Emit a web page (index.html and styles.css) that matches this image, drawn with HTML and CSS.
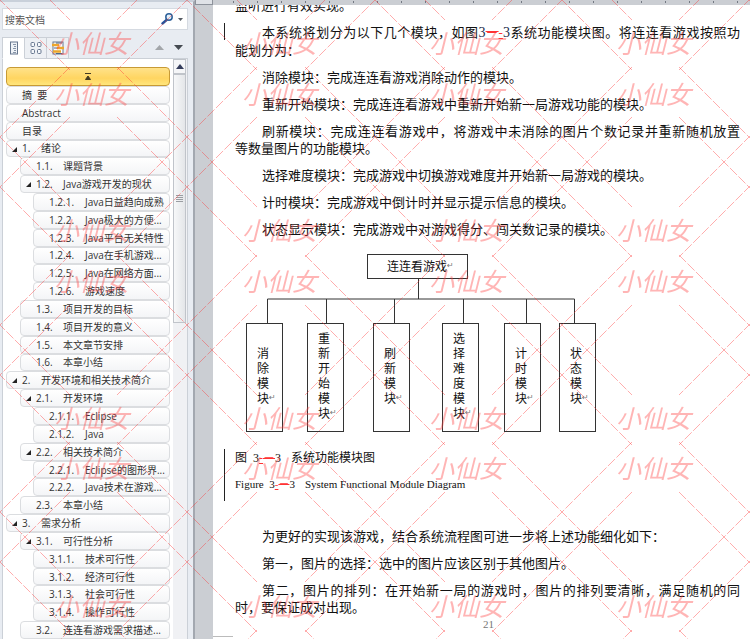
FILE: index.html
```html
<!DOCTYPE html>
<html lang="zh-CN">
<head>
<meta charset="utf-8">
<title>连连看游戏</title>
<link rel="stylesheet" href="styles.css">
</head>
<body>
<div class="app">
  <aside class="nav">
    <form class="search">
      <input type="search" placeholder="搜索文档" aria-label="搜索文档">
      <button type="button" class="plain" aria-label="搜索">
        <svg width="24" height="14" viewBox="0 0 24 14"><path d="M1.500 11.500 5.500 8" stroke="#27549b" stroke-width="2.400" stroke-linecap="round"/><circle cx="8" cy="5" r="3.200" fill="#e4f1fb" stroke="#2d6099" stroke-width="1.500"/><path d="M17 6h5l-2.500 3z" fill="#555b63"/></svg>
      </button>
    </form>
    <div class="tabs">
      <button type="button" class="tab active" aria-label="标题">
        <svg width="14" height="14" viewBox="0 0 14 14"><rect x="3.500" y="1" width="7" height="12" fill="#eef2f7" stroke="#67778f"/><path d="M6 3.500h3M7 5.500h2M6 7.500h3M7 9.500h2M6 11.500h3" stroke="#8794a8"/></svg>
      </button>
      <button type="button" class="tab" aria-label="页面">
        <svg width="14" height="14" viewBox="0 0 14 14" fill="#f5f8fc" stroke="#67778f"><rect x="2" y="1.500" width="3.500" height="4" rx="1"/><rect x="8.500" y="1.500" width="3.500" height="4" rx="1"/><rect x="2" y="8.500" width="3.500" height="4" rx="1"/><rect x="8.500" y="8.500" width="3.500" height="4" rx="1"/></svg>
      </button>
      <button type="button" class="tab" aria-label="结果">
        <svg width="14" height="14" viewBox="0 0 14 14"><rect x="2" y="1" width="10" height="12" fill="#fff" stroke="#67778f"/><path d="M1 4h7M6 7h7M2 10.500h8" stroke="#eda62b" stroke-width="2.500"/><path d="M5 2h6M3 7h3M5 12.500h6" stroke="#4e6689"/></svg>
      </button>
      <span class="steps">
        <button type="button" class="plain" aria-label="上一个"><svg width="9" height="6"><path d="M0 5h9L4.500 0z" fill="#a3a6aa"/></svg></button>
        <button type="button" class="plain" aria-label="下一个"><svg width="9" height="6"><path d="M0 0h9L4.500 5z" fill="#454a51"/></svg></button>
      </span>
    </div>
    <div class="panel">
      <div class="outline">
        <button type="button" class="top" aria-label="跳转到文档开头"><svg width="8" height="7"><path d="M1 .5h6M1.500 6.500 4 3l2.500 3.500z" stroke="#453a20" fill="#453a20"/></svg></button>
        <nav class="tree">
          <a href="#" class="l1">摘&nbsp; 要</a>
          <a href="#" class="l1">Abstract</a>
          <a href="#" class="l1">目录</a>
          <a href="#" class="l1 open"><b>1.</b>绪论</a>
          <a href="#" class="l2"><b>1.1.</b>课题背景</a>
          <a href="#" class="l2 open"><b>1.2.</b>Java游戏开发的现状</a>
          <a href="#" class="l3"><b>1.2.1.</b>Java日益趋向成熟</a>
          <a href="#" class="l3"><b>1.2.2.</b>Java极大的方便...</a>
          <a href="#" class="l3"><b>1.2.3.</b>Java平台无关特性</a>
          <a href="#" class="l3"><b>1.2.4.</b>Java在手机游戏...</a>
          <a href="#" class="l3"><b>1.2.5.</b>Java在网络方面...</a>
          <a href="#" class="l3"><b>1.2.6.</b>游戏速度</a>
          <a href="#" class="l2"><b>1.3.</b>项目开发的目标</a>
          <a href="#" class="l2"><b>1.4.</b>项目开发的意义</a>
          <a href="#" class="l2"><b>1.5.</b>本文章节安排</a>
          <a href="#" class="l2"><b>1.6.</b>本章小结</a>
          <a href="#" class="l1 open"><b>2.</b>开发环境和相关技术简介</a>
          <a href="#" class="l2 open"><b>2.1.</b>开发环境</a>
          <a href="#" class="l3"><b>2.1.1.</b>Eclipse</a>
          <a href="#" class="l3"><b>2.1.2.</b>Java</a>
          <a href="#" class="l2 open"><b>2.2.</b>相关技术简介</a>
          <a href="#" class="l3"><b>2.2.1.</b>Eclipse的图形界...</a>
          <a href="#" class="l3"><b>2.2.2.</b>Java技术在游戏...</a>
          <a href="#" class="l2"><b>2.3.</b>本章小结</a>
          <a href="#" class="l1 open"><b>3.</b>需求分析</a>
          <a href="#" class="l2 open"><b>3.1.</b>可行性分析</a>
          <a href="#" class="l3"><b>3.1.1.</b>技术可行性</a>
          <a href="#" class="l3"><b>3.1.2.</b>经济可行性</a>
          <a href="#" class="l3"><b>3.1.3.</b>社会可行性</a>
          <a href="#" class="l3"><b>3.1.4.</b>操作可行性</a>
          <a href="#" class="l2"><b>3.2.</b>连连看游戏需求描述...</a>
        </nav>
      </div>
      <div class="scroll">
        <button type="button" class="up" aria-label="向上滚动"><svg width="8" height="5"><path d="M0 5h8L4 0z" fill="#343c5b"/></svg></button>
        <div class="thumb"><svg width="7" height="7"><path d="M0 .5h7M0 2.500h7M0 4.500h7M0 6.500h7" stroke="#9a9da2"/></svg></div>
      </div>
    </div>
  </aside>
  <div class="gutter"><div class="corner"></div></div>
  <main class="doc">
    <div class="ruler"></div>
    <article class="page">
      <p class="flat">监听进行有效实现。</p>
      <p class="changed"><span class="full">本系统将划分为以下几个模块，如图<i class="num">3</i><del>－</del><ins>-</ins><i class="num">3</i>系统功能模块图。将连连看游戏按照功</span>能划分为：</p>
      <p>消除模块：完成连连看游戏消除动作的模块。</p>
      <p>重新开始模块：完成连连看游戏中重新开始新一局游戏功能的模块。</p>
      <p><span class="full">刷新模块：完成连连看游戏中，将游戏中未消除的图片个数记录并重新随机放置</span>等数量图片的功能模块。</p>
      <p>选择难度模块：完成游戏中切换游戏难度并开始新一局游戏的模块。</p>
      <p>计时模块：完成游戏中倒计时并显示提示信息的模块。</p>
      <p>状态显示模块：完成游戏中对游戏得分、闯关数记录的模块。</p>
      <figure class="figure">
        <div class="diagram">
          <svg class="wires" width="362" height="178" fill="none" stroke="#333"><path d="M183.500 24v21M32.500 69v-24h307v24M91.500 45v24M159.500 45v24M228.500 45v24M291.500 45v24"/></svg>
          <div class="root">连连看游戏<s>↵</s></div>
          <div class="node n1">消<br>除<br>模<br>块<s>↵</s></div>
          <div class="node n2">重<br>新<br>开<br>始<br>模<br>块<s>↵</s></div>
          <div class="node n3">刷<br>新<br>模<br>块<s>↵</s></div>
          <div class="node n4">选<br>择<br>难<br>度<br>模<br>块<s>↵</s></div>
          <div class="node n5">计<br>时<br>模<br>块<s>↵</s></div>
          <div class="node n6">状<br>态<br>模<br>块<s>↵</s></div>
        </div>
        <figcaption>
          <div>图&nbsp; 3<ins>-</ins><del>－</del>3<span class="title">系统功能模块图</span></div>
          <div class="en">Figure&nbsp; 3<ins>-</ins><del>－</del>3<span class="title">System Functional Module Diagram</span></div>
        </figcaption>
      </figure>
      <p>为更好的实现该游戏，结合系统流程图可进一步将上述功能细化如下：</p>
      <p>第一，图片的选择：选中的图片应该区别于其他图片。</p>
      <p><span class="full">第二，图片的排列：在开始新一局的游戏时，图片的排列要清晰，满足随机的同</span>时，要保证成对出现。</p>
      <footer>21</footer>
    </article>
  </main>
</div>
<svg class="watermark" aria-hidden="true">
  <defs>
    <path id="cross" d="M-70-70 70 70M70-70-70 70"/>
    <g id="column">
      <use href="#cross" y="-50"/><use href="#cross" y="0"/>
      <use href="#cross" y="137"/><use href="#cross" y="187"/>
      <use href="#cross" y="325"/><use href="#cross" y="375"/>
      <use href="#cross" y="512"/><use href="#cross" y="562"/>
      <use href="#cross" y="700"/>
    </g>
  </defs>
  <g class="lines">
    <use href="#column" x="0"/><use href="#column" x="187"/><use href="#column" x="375"/><use href="#column" x="562"/><use href="#column" x="749"/>
  </g>
  <g class="marks">
    <text x="54" y="53">小仙女</text><text x="242" y="53">小仙女</text><text x="429" y="53">小仙女</text><text x="616" y="53">小仙女</text>
    <text x="54" y="104">小仙女</text><text x="242" y="104">小仙女</text><text x="429" y="104">小仙女</text><text x="616" y="104">小仙女</text>
    <text x="54" y="240">小仙女</text><text x="242" y="240">小仙女</text><text x="429" y="240">小仙女</text><text x="616" y="240">小仙女</text>
    <text x="54" y="291">小仙女</text><text x="242" y="291">小仙女</text><text x="429" y="291">小仙女</text><text x="616" y="291">小仙女</text>
    <text x="54" y="428">小仙女</text><text x="242" y="428">小仙女</text><text x="429" y="428">小仙女</text><text x="616" y="428">小仙女</text>
    <text x="54" y="478">小仙女</text><text x="242" y="478">小仙女</text><text x="429" y="478">小仙女</text><text x="616" y="478">小仙女</text>
    <text x="54" y="616">小仙女</text><text x="242" y="616">小仙女</text><text x="429" y="616">小仙女</text><text x="616" y="616">小仙女</text>
  </g>
</svg>
</body>
</html>
```
FILE: styles.css
```css
* { box-sizing: border-box; }
body { margin: 0; overflow: hidden; font-family: "Open Sans", "Noto Sans CJK SC", sans-serif; }
button { font: inherit; margin: 0; padding: 0; }
svg { display: block; }
.app { display: flex; height: 100vh; background: #fff; }

/* Navigation pane */
.nav { flex: 0 0 195px; display: flex; flex-direction: column; padding: 6px 5px 0 2px; background: #e8ecf2; border-top: 2px solid #c9d0da; border-right: 2px solid #a3a8b0; }
.search { display: flex; align-items: center; height: 22px; margin: 0; background: #fff; border: 1px solid #d5dae1; padding-right: 2px; }
.search input { flex: 1; min-width: 0; padding: 0 0 0 2px; border: 0; outline: 0; background: none; font: 10px "Noto Sans CJK SC", sans-serif; }
.search input::placeholder { color: #555; opacity: 1; }
.plain { border: 0; background: none; }
.tabs { display: flex; height: 22px; margin-top: 7px; }
.tab { display: flex; align-items: center; justify-content: center; width: 22px; border: 1px solid #cbd0d7; border-left: 0; background: #edf0f4; }
.tab.active { width: 23px; border-left: 1px solid #cbd0d7; border-bottom-color: #fff; background: #fff; }
.steps { flex: 1; display: flex; align-items: center; justify-content: flex-end; gap: 10px; padding-right: 5px; border-bottom: 1px solid #cbd0d7; }
.panel { flex: 1; min-height: 0; display: flex; background: #fff; border: solid #cbd0d7; border-width: 0 1px; }
.outline { flex: 1; min-width: 0; display: flex; flex-direction: column; padding: 8px 3px 0 3px; }
.top { display: flex; align-items: center; justify-content: center; flex: 0 0 19px; border: 1px solid #c79a35; border-radius: 4px; background: linear-gradient(#ffe28a, #ffd561 60%, #ffe67c); }
.tree { flex: 1; min-height: 0; display: grid; grid-auto-rows: 1fr; }
.tree a { position: relative; display: flex; align-items: center; min-height: 0; overflow: hidden; border: 1px solid #dbdde0; border-radius: 4px; background: linear-gradient(#fff, #f4f5f7); color: #333; font-size: 10px; line-height: 14px; white-space: nowrap; text-decoration: none; padding-left: 15px; }
.tree b { flex: none; font-weight: 400; }
.l1 b { width: 19px; }
.tree .l2 { margin-left: 14px; }
.l2 b { width: 27px; }
.tree .l3 { margin-left: 27px; }
.l3 b { width: 36px; }
.open::before { content: ""; position: absolute; left: 5px; top: 6px; border: solid transparent; border-width: 0 0 5px 5px; border-bottom-color: #222; }
.scroll { flex: 0 0 14px; background: #f0f1f4; }
.up { display: flex; align-items: center; justify-content: center; width: 13px; height: 15px; border: 1px solid #c0c4ca; background: #f5f6f8; }
.thumb { display: flex; align-items: center; justify-content: center; width: 13px; height: 43%; border: 1px solid #c0c4ca; background: linear-gradient(90deg, #f7f8f9, #e4e6e9); }

/* Document area */
.gutter { flex: 0 0 18px; background: #cbced3; }
.corner { height: 5px; border: 1px solid #8d929b; border-top: 0; background: #dfe2e7; }
.doc { flex: 1; min-width: 0; }
.ruler { height: 5px; background: repeating-linear-gradient(90deg, transparent 0 20px, #737983 20px 21px, transparent 21px 24px) 0 1px / 100% 2px no-repeat, #cbced3; }
.page { position: relative; height: calc(100vh - 5px); overflow: hidden; padding: 0 8px 0 22px; color: #111; font: 13px/17px "Noto Sans CJK SC", sans-serif; }
.page::after { content: ""; position: absolute; left: 0; bottom: 2px; width: 20px; border-top: 1px solid #bbb; }
p { position: relative; margin: 0 0 10px; text-indent: 27px; }
.flat { margin-top: -9px; text-indent: 0; }
.full { display: block; text-align: justify; text-align-last: justify; white-space: nowrap; padding-right: 2px; }
.changed::before { content: ""; position: absolute; left: -11px; top: 0; height: 17px; border-left: 1px solid #222; }
.num { font: 14px/17px "Liberation Serif", serif; color: #1c2c4c; }
del, ins { color: #f33; }
ins { font-family: "Liberation Serif", serif; }
.figure { margin: 0; }
.diagram { position: relative; height: 178px; margin-top: 17px; font-size: 12px; line-height: 15px; }
.wires { position: absolute; left: 0; top: 0; }
.diagram s { position: absolute; text-decoration: none; color: #777; font: 8px/15px "DejaVu Sans", sans-serif; }
.root { position: absolute; left: 132px; top: 0; width: 101px; height: 25px; padding: 3px 0 0 19px; border: 1px solid #333; }
.node { position: absolute; top: 69px; width: 37px; height: 109px; padding: 21px 0 0 10px; border: 1px solid #333; }
.n1 { left: 11px; }
.n2 { left: 72px; padding-top: 6px; }
.n3 { left: 138px; }
.n4 { left: 207px; padding-top: 6px; }
.n5 { left: 269px; }
.n6 { left: 324px; }
figcaption { position: relative; display: grid; gap: 9px; padding: 18px 0 8px; margin-bottom: 26px; font: 12px/17px "Liberation Serif", "Noto Sans CJK SC", serif; }
figcaption::before { content: ""; position: absolute; left: -11px; top: 17px; bottom: 0; border-left: 1px solid #222; }
figcaption .en { font-size: 11px; }
.title { margin-left: 10px; }
footer { margin-top: -8px; text-align: center; font: 11px/14px "Liberation Serif", serif; color: #777; }

/* Watermark laid over the whole window */
.watermark { position: fixed; inset: 0; width: 100%; height: 100%; pointer-events: none; }
.lines { fill: none; stroke: #ff3030; stroke-opacity: .4; stroke-dasharray: 10 2; }
.marks { fill: #ff3c3c; fill-opacity: .38; font: italic 25px "Noto Sans CJK SC", sans-serif; }
```
